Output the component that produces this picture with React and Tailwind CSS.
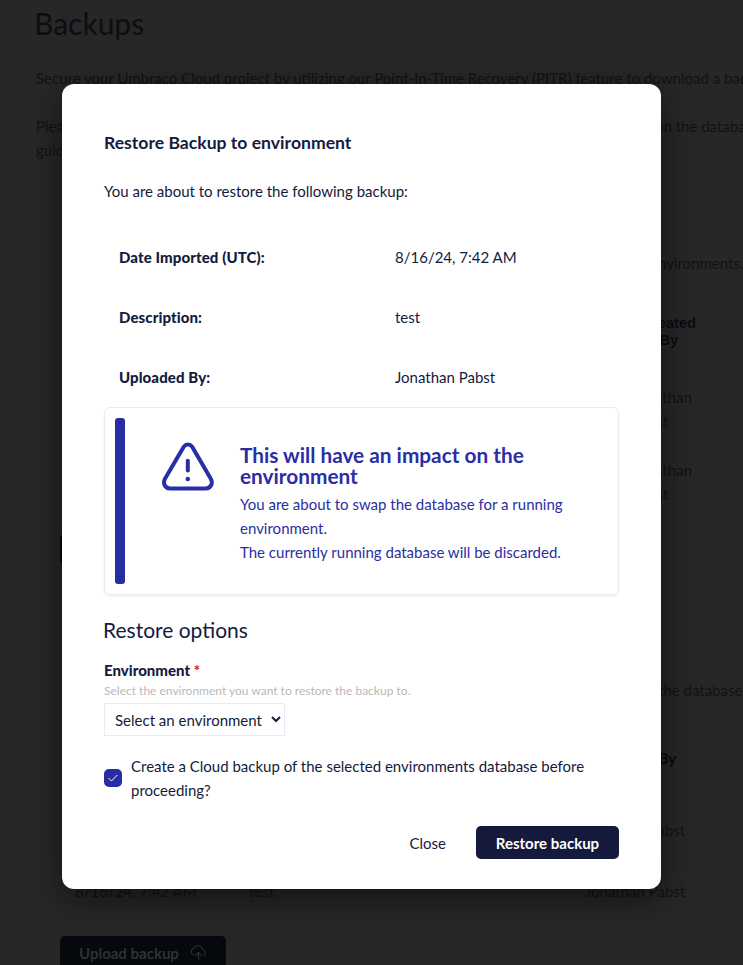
import React from "react";

function Backdrop() {
  return (
    <div className="flex h-[965px] w-[743px] overflow-hidden bg-[#272727] text-[15px] leading-6 text-[#111217]">
      <div className="w-[5px] shrink-0 bg-[#252827]" />
      <div className="w-[738px] shrink-0 pl-[31px] whitespace-nowrap">
        <h1 className="-ml-[2px] h-[66px] pt-[5px] text-[30px] leading-9 text-[#0b0e12]">Backups</h1>
        <p>Secure your Umbraco Cloud project by utilizing our Point-In-Time Recovery (PITR) feature to download a backup</p>
        <div className="mt-6 flex">
          <p className="w-[619px] shrink-0">Please<br />guide</p>
          <p className="shrink-0">on the database</p>
        </div>
        <section className="h-[427px]">
          <p className="ml-[614px] pt-[89px]">environments.</p>
          <div className="ml-[24px] mt-[40px]">
            <div className="flex h-[57px] justify-end border-b border-[#242424] pr-[47px] text-center font-['Liberation_Sans',sans-serif] text-[14.6px] font-bold leading-[17px] text-[#0a0b12]">
              <span>Created<br />By</span>
            </div>
            <div className="h-[73px] border-b border-[#242424] pl-[572px] pt-[13px]">Jonathan<br />Pabst</div>
            <div className="h-[73px] pl-[572px] pt-[13px]">Jonathan<br />Pabst</div>
          </div>
          <div className="ml-[24px] mt-[17px] h-[28px] w-[150px] rounded bg-[#05070a]" />
        </section>
        <section className="pt-[89px]">
          <p className="ml-[622px]">the database</p>
          <div className="ml-[24px] mt-[46px]">
            <div className="h-[52px] border-b border-[#242424] pl-[530px] font-black leading-5 text-[#0a0b12]">Uploaded By</div>
            <div className="h-[61px] border-b border-[#242424] pl-[525px] pt-[18px]">Jonathan Pabst</div>
            <div className="flex h-[75px] pl-[15px] pt-[18px]">
              <span className="w-[174px]">8/16/24, 7:42 AM</span>
              <span className="w-[336px]">test</span>
              <span>Jonathan Pabst</span>
            </div>
          </div>
          <button className="ml-[24px] flex h-[35px] w-[166px] items-center rounded-[5px] bg-[#05080d] pb-[2px] pl-[19px] font-bold text-[#303134]">
            Upload backup
            <svg className="ml-[11px]" width="17" height="17" viewBox="0 0 24 24" fill="none" stroke="currentColor" strokeWidth="1.5" strokeLinecap="round" strokeLinejoin="round">
              <path d="M5 16A5.5 5.5 0 0 1 5 6a7 7 0 0 1 13 2 4.6 4.6 0 0 1 2 8M12 22V12m-4 4 4-4 4 4" />
            </svg>
          </button>
        </section>
      </div>
    </div>
  );
}

function Detail({ label, value }) {
  return (
    <div className="flex h-[60px] items-center pl-[15px]">
      <dt className="w-[276px] font-black tracking-[0.1px]">{label}</dt>
      <dd>{value}</dd>
    </div>
  );
}

function Modal() {
  return (
    <div role="dialog" className="absolute left-[62px] top-[84px] h-[805px] w-[599px] rounded-[12px] bg-white px-[42px] text-[15px] leading-6 text-[#151b3d] shadow-[0_10px_34px_rgba(0,0,0,0.5)]">
      <h2 className="pt-[47px] text-[17.6px] font-bold leading-6">Restore Backup to environment</h2>
      <p className="mt-[24px]">You are about to restore the following backup:</p>
      <dl className="mt-[24px]">
        <Detail label="Date Imported (UTC):" value="8/16/24, 7:42 AM" />
        <Detail label="Description:" value="test" />
        <Detail label="Uploaded By:" value="Jonathan Pabst" />
      </dl>
      <div className="flex h-[188px] rounded-[6px] border border-[#e9e9f8] p-[10px] text-[#2a2ea5] shadow-[0_2px_3px_rgba(0,0,0,0.06)]">
        <div className="h-[166px] w-[10px] rounded-[3px] bg-[#282da2]" />
        <svg className="ml-[36px] mt-[24px] shrink-0" width="54" height="50" viewBox="0 0 54 50" fill="none" stroke="currentColor" strokeWidth="4" strokeLinecap="round" strokeLinejoin="round">
          <path d="M22.9 4.6 4 36.7C1.5 41.3 4 46.4 9 46.4H44.8C49.8 46.4 52.3 41.3 49.8 36.7L31 4.6C29 1.8 24.9 1.8 22.9 4.6Z" />
          <path d="M26.8 18.8V28.5" />
          <circle cx="26.8" cy="37" r="2.3" fill="currentColor" stroke="none" />
        </svg>
        <div className="ml-[25px] whitespace-nowrap pt-[26px]">
          <h3 className="text-[20.8px] font-bold leading-[21px]">This will have an impact on the<br />environment</h3>
          <p className="mt-[6px]">You are about to swap the database for a running<br />environment.<br />The currently running database will be discarded.</p>
        </div>
      </div>
      <h3 className="-ml-px mt-[21px] text-[21px] leading-[28px]">Restore options</h3>
      <label className="mt-[14px] block leading-6 font-black">Environment <span className="text-[#d42054]">*</span></label>
      <p className="mt-px text-[12px] leading-4 text-[#b9b9bb]">Select the environment you want to restore the backup to.</p>
      <button className="mt-[4px] flex h-[33px] w-[181px] items-center border border-[#e9e9f8] pl-[10px] pt-px whitespace-nowrap">
        Select an environment
        <svg className="ml-[9px] -mt-[2px] shrink-0" width="10" height="7" viewBox="0 0 10 7" fill="none" stroke="currentColor" strokeWidth="2">
          <path d="m1 1 4 4 4-4" />
        </svg>
      </button>
      <div className="mt-[18px] flex">
        <span className="mt-[15px] flex size-[18px] shrink-0 items-center justify-center rounded-[5px] bg-[#2a2da1]">
          <svg width="10" height="8" viewBox="0 0 10 8" fill="none" stroke="white" strokeWidth="1"><path d="m.7 4.2 2.7 2.8L9.3 1" /></svg>
        </span>
        <p className="ml-[9px] whitespace-nowrap">Create a Cloud backup of the selected environments database before<br />proceeding?</p>
      </div>
      <div className="mt-[24px] flex items-center justify-end">
        <button className="mr-[30px]">Close</button>
        <button className="h-[33px] w-[143px] rounded-[5px] bg-[#151a3d] pt-px font-bold text-white">Restore backup</button>
      </div>
    </div>
  );
}

export default function App() {
  return (
    <main className="relative h-[965px] w-[743px] overflow-hidden font-['Lato',sans-serif]">
      <Backdrop />
      <Modal />
    </main>
  );
}
